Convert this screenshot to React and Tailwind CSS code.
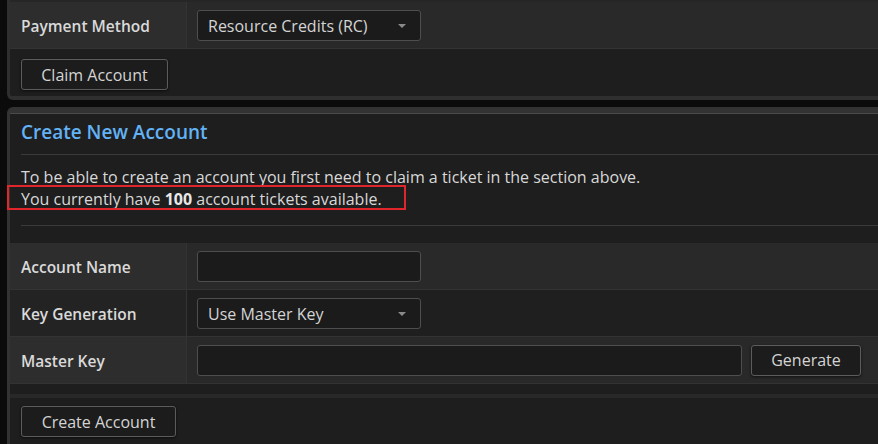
import React from 'react';

const Field = ({ wide }) => (
  <div className={`h-[31px] rounded-[3px] border border-[#4e4e4e] bg-[#1b1b1b] ${wide ? 'flex-1' : 'w-[224px]'}`}></div>
);

const Select = ({ value }) => (
  <div className="h-[31px] w-[224px] rounded-[3px] border border-[#4e4e4e] bg-[#1b1b1b] flex items-center justify-between pl-[10px] pr-[14px] pt-[1px]">
    <span className="text-[16px] text-[#d4d4d4]">{value}</span>
    <span className="w-0 h-0 border-x-[4px] border-x-transparent border-t-[4px] border-t-[#8a8a8a]"></span>
  </div>
);

const Button = ({ children, width }) => (
  <button className={`h-[31px] ${width} rounded-[3px] border border-[#5c5c5c] bg-[#1c1c1c] text-[16px] text-[#d4d4d4] shadow-[0_1px_3px_rgba(0,0,0,0.6)]`}>
    {children}
  </button>
);

const Row = ({ label, odd, children }) => (
  <div className={`grid grid-cols-[177px_1fr] border-b border-[#333] ${odd ? 'bg-[#292929]' : 'bg-[#1f1f1f]'}`}>
    <div className="flex items-center pl-[11px] pt-[3px] h-[46px] border-r border-[#333] bg-white/[0.02] font-semibold text-[15.5px] text-[#dadada]">
      {label}
    </div>
    <div className="flex items-center gap-[9px] pl-[10px] pr-[16px]">{children}</div>
  </div>
);

export default function App() {
  return (
    <div className="w-[878px] h-[444px] overflow-hidden bg-[#0b0b0b] font-['Open_Sans',sans-serif]">
      <div className="pl-[7px] w-[930px]">
        {/* claim panel (top cut off) */}
        <div className="bg-[#1e1e1e] border-x-[3px] border-b-[4px] border-[#2f2f2f] rounded-b-md">
          <div className="border-t-2 border-[#262626]">
            <Row label="Payment Method" odd>
              <Select value="Resource Credits (RC)" />
            </Row>
          </div>
          <div className="pl-[11px] pt-[10px] pb-[6px]">
            <Button width="w-[147px]">Claim Account</Button>
          </div>
        </div>

        {/* create panel */}
        <div className="relative mt-[7px] bg-[#1e1e1e] border-x-[3px] border-t-[6px] border-[#333] rounded-t-md shadow-[inset_0_1px_0_#4a4a4a]">
          <div className="mx-[11px] pt-[5px] pb-[8px] border-b border-[#3a3a3a]">
            <h2 className="text-[19px] font-semibold text-[#62b2f5] leading-[28px]">Create New Account</h2>
          </div>
          <div className="mx-[11px] pt-[11px] pb-[15px] border-b border-[#3a3a3a] text-[16px] leading-[22px] text-[#d8d8d8]">
            <p>To be able to create an account you first need to claim a ticket in the section above.</p>
            <p>You currently have <b className="font-bold text-[#e8e8e8]">100</b> account tickets available.</p>
          </div>
          <div className="absolute left-[-3px] top-[72px] w-[399px] h-[25px] border-2 border-[#e0262b]"></div>

          <div className="mt-[17px]">
            <Row label="Account Name" odd>
              <Field />
            </Row>
            <Row label="Key Generation">
              <Select value="Use Master Key" />
            </Row>
            <Row label="Master Key" odd>
              <div className="flex items-center gap-[9px] w-[664px]">
                <Field wide />
                <Button width="w-[110px]">Generate</Button>
              </div>
            </Row>
          </div>
          <div className="h-[10px]"></div>
          <div className="border-t-4 border-[#282828] pl-[11px] pt-[8px] pb-[10px]">
            <Button width="w-[155px]">Create Account</Button>
          </div>
        </div>
      </div>
    </div>
  );
}
